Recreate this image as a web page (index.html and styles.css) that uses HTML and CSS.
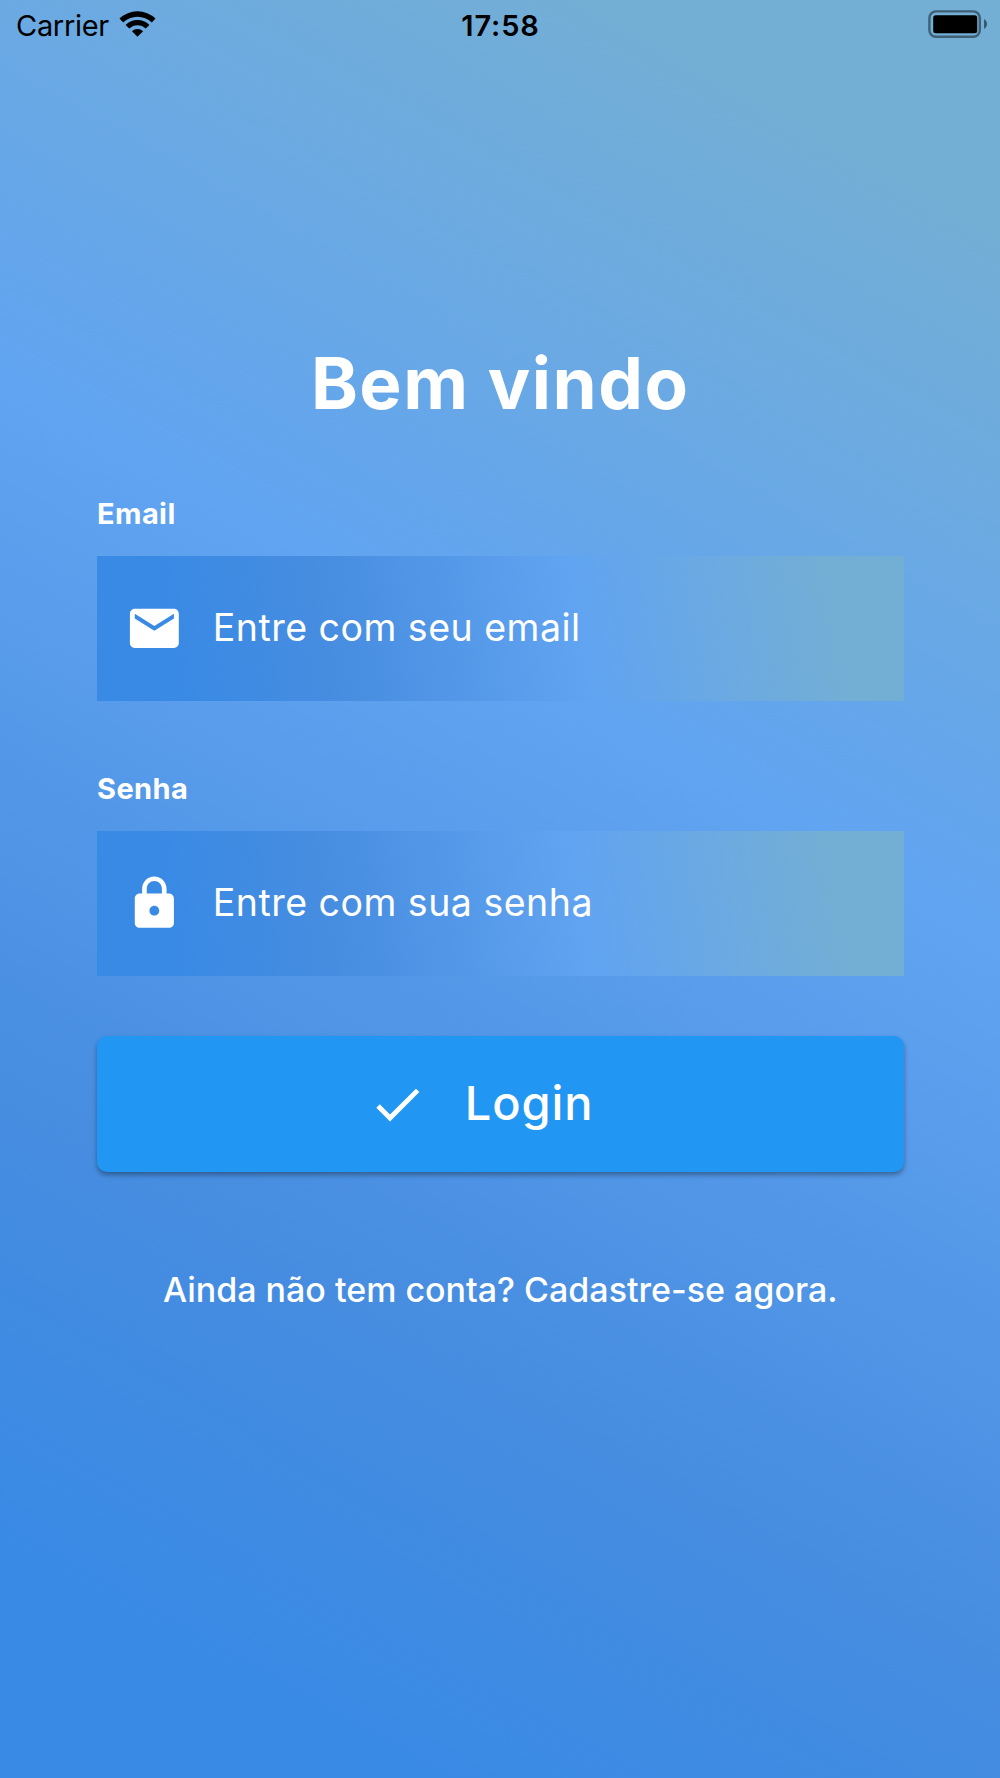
FILE: index.html
```
<!DOCTYPE html>
<html lang="pt-BR">
<head>
    <meta charset="UTF-8">
    <meta name="viewport" content="width=device-width, initial-scale=1.0">
    <title>Login</title>
    <link rel="stylesheet" href="styles.css">
</head>
<body>
    <header class="status-bar">
        <div class="carrier">
            <span class="carrier-name">Carrier</span>
            <svg class="wifi" viewBox="0 0 37 27">
                <path d="M0.5 8.6A26 26 0 0 1 36.5 8.6L32.8 12.4A20.6 20.6 0 0 0 4.2 12.4Z"/>
                <path d="M6.6 14.9A17 17 0 0 1 30.4 14.9L26.7 18.6A11.7 11.7 0 0 0 10.3 18.6Z"/>
                <path d="M12.9 21.2A8.2 8.2 0 0 1 24.1 21.2L18.5 26.8Z"/>
            </svg>
        </div>
        <span class="time">17:58</span>
        <svg class="battery" viewBox="0 0 60 28">
            <rect class="battery-case" x="1.4" y="1.4" width="50.4" height="25.4" rx="6.5"/>
            <rect x="5.2" y="5.2" width="44" height="18" rx="2.5"/>
            <path class="battery-tip" d="M56 9c4 2.2 4 7.8 0 10z"/>
        </svg>
    </header>

    <main class="container">
        <h1>Bem vindo</h1>
        <form>
            <label for="email">Email</label>
            <div class="field">
                <svg class="icon" viewBox="0 0 24 24">
                    <path d="M20 4H4c-1.1 0-1.99.9-1.99 2L2 18c0 1.1.9 2 2 2h16c1.1 0 2-.9 2-2V6c0-1.1-.9-2-2-2zm0 4l-8 5-8-5V6l8 5 8-5v2z"/>
                </svg>
                <input type="email" id="email" name="email" placeholder="Entre com seu email">
            </div>
            <label for="senha">Senha</label>
            <div class="field">
                <svg class="icon" viewBox="0 0 24 24">
                    <path d="M18 8h-1V6c0-2.76-2.24-5-5-5S7 3.24 7 6v2H6c-1.1 0-2 .9-2 2v10c0 1.1.9 2 2 2h12c1.1 0 2-.9 2-2V10c0-1.1-.9-2-2-2zm-6 9c-1.1 0-2-.9-2-2s.9-2 2-2 2 .9 2 2-.9 2-2 2zm3.1-9H8.9V6c0-1.71 1.39-3.1 3.1-3.1 1.71 0 3.1 1.39 3.1 3.1v2z"/>
                </svg>
                <input type="password" id="senha" name="senha" placeholder="Entre com sua senha">
            </div>
            <button type="button" class="login">
                <svg class="icon" viewBox="0 0 24 24">
                    <path d="M9 16.17L4.83 12l-1.42 1.41L9 19 21 7l-1.41-1.41z"/>
                </svg>
                <span>Login</span>
            </button>
        </form>
        <a class="signup">Ainda não tem conta? Cadastre-se agora.</a>
    </main>
</body>
</html>
```
FILE: styles.css
```
* {
    box-sizing: border-box;
}
body {
    margin: 0;
    height: 1778px;
    overflow: hidden;
    font-family: Inter, "Liberation Sans", sans-serif;
    color: #fff;
    background: linear-gradient(209.36deg, #73aed5 10%, #61a4f1 40%, #478de0 70%, #398ae5 90%);
}
.status-bar {
    display: grid;
    grid-template-columns: 1fr auto 1fr;
    align-items: center;
    height: 50px;
    padding: 0 12px 0 16px;
    color: #000;
    font-size: 29px;
}
.carrier {
    display: flex;
    align-items: center;
    gap: 10px;
}
.carrier-name {
    letter-spacing: -0.3px;
}
.wifi {
    width: 37px;
    height: 27px;
    margin-bottom: 3px;
}
.time {
    margin-right: 3px;
    font-weight: 600;
    letter-spacing: 0.9px;
}
.battery {
    width: 60px;
    height: 28px;
    margin-bottom: 2px;
    justify-self: end;
}
.battery-case {
    fill: none;
    stroke: #000;
    stroke-opacity: 0.45;
    stroke-width: 2.4;
}
.battery-tip {
    fill-opacity: 0.5;
}
.container {
    display: flex;
    flex-direction: column;
    padding: 288px 96.5px 0 97px;
}
h1 {
    margin: 0;
    font-size: 71px;
    font-weight: 700;
    line-height: 90px;
    letter-spacing: 1.5px;
    text-align: center;
}
form {
    display: flex;
    flex-direction: column;
    margin-top: 66px;
}
label {
    height: 40px;
    margin-bottom: 22px;
    font-size: 29px;
    font-weight: 700;
    line-height: 40px;
    letter-spacing: 0.4px;
}
.field {
    display: flex;
    align-items: center;
    gap: 29px;
    height: 145px;
    margin-bottom: 68px;
    padding-left: 28px;
    background: linear-gradient(259.8deg, #73aed5 10%, #61a4f1 40%, #478de0 70%, #398ae5 90%);
}
.icon {
    flex: none;
    width: 58.7px;
    height: 58.7px;
    fill: #fff;
}
.field input {
    flex: 1;
    padding: 0 0 3px;
    border: none;
    outline: none;
    background: none;
    color: #fff;
    font-family: inherit;
    font-size: 37.5px;
    letter-spacing: 0.5px;
}
.field input::placeholder {
    color: #fff;
    opacity: 1;
}
.login {
    display: flex;
    align-items: center;
    height: 136px;
    margin-top: -8px;
    padding: 0 0 0 271px;
    gap: 38px;
    border: none;
    border-radius: 10px;
    background: #2196f3;
    box-shadow: 0 3px 5px rgba(0, 0, 0, 0.35);
    color: #fff;
    font-family: inherit;
    font-size: 47px;
    font-weight: 500;
    letter-spacing: 0.9px;
}
.login span {
    padding-bottom: 3px;
}
.signup {
    margin-top: 93px;
    font-size: 34px;
    font-weight: 500;
    line-height: 50px;
    text-align: center;
}
```
